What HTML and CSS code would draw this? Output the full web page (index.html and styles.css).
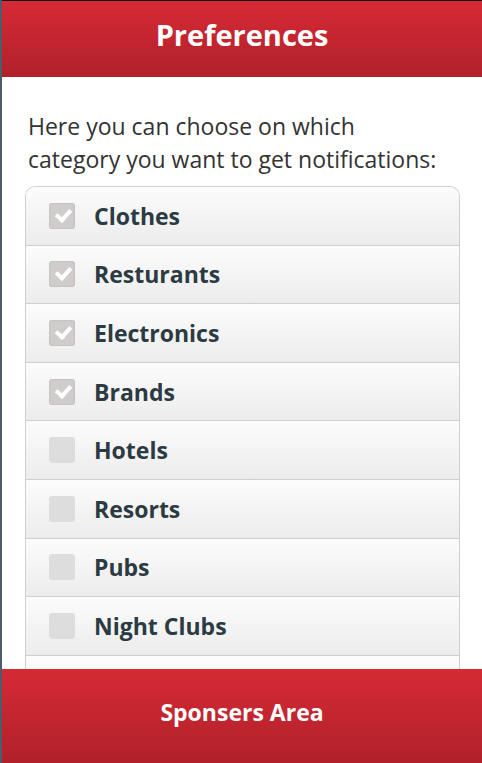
FILE: index.html
```html
<!DOCTYPE html>
<html lang="en">
<head>
  <meta charset="UTF-8">
  <meta name="viewport" content="width=device-width, initial-scale=1.0">
  <title>Preferences</title>
  <link rel="stylesheet" href="styles.css">
</head>
<body>
<div class="page">
  <div class="header">Preferences</div>

  <div class="content">
    <p class="intro">Here you can choose on which<br>category you want to get notifications:</p>

    <!-- category list -->
    <div class="list">
      <label class="row"><input type="checkbox" checked><span class="box"></span><span class="name">Clothes</span></label>
      <label class="row"><input type="checkbox" checked><span class="box"></span><span class="name">Resturants</span></label>
      <label class="row"><input type="checkbox" checked><span class="box"></span><span class="name">Electronics</span></label>
      <label class="row"><input type="checkbox" checked><span class="box"></span><span class="name">Brands</span></label>
      <label class="row"><input type="checkbox"><span class="box"></span><span class="name">Hotels</span></label>
      <label class="row"><input type="checkbox"><span class="box"></span><span class="name">Resorts</span></label>
      <label class="row"><input type="checkbox"><span class="box"></span><span class="name">Pubs</span></label>
      <label class="row"><input type="checkbox"><span class="box"></span><span class="name">Night Clubs</span></label>
      <label class="row"><input type="checkbox"><span class="box"></span><span class="name">Cafes</span></label>
    </div>
  </div>

  <div class="footer">Sponsers Area</div>
</div>
</body>
</html>
```

FILE: styles.css
```css
body {
  margin: 0;
  font-family: "Open Sans", "DejaVu Sans", sans-serif;
  background: #fff;
  color: #333;
  overflow: hidden;
}
.page {
  border-left: 2px solid #4d5b6a;
  min-height: 763px;
  box-sizing: border-box;
}
.header {
  height: 77px;
  border-top: 1px solid #111;
  background: linear-gradient(#d62a35, #b0212a);
  color: #fff;
  font-size: 29px;
  font-weight: 700;
  display: flex;
  align-items: center;
  justify-content: center;
  padding-bottom: 9px;
  box-sizing: border-box;
}
.content {
  padding: 33px 21px 0 26px;
}
.intro {
  margin: 0 0 10px;
  font-size: 23px;
  line-height: 33px;
}

/* List */
.list {
  border: 1px solid #cfcfcf;
  border-bottom: none;
  border-radius: 10px 10px 0 0;
  overflow: hidden;
  margin-left: -3px;
  margin-right: 1px;
}
.row {
  display: flex;
  align-items: center;
  height: 57.6px;
  border-bottom: 1px solid #cfcfcf;
  background: linear-gradient(#fcfcfc, #ececec);
  padding-left: 23px;
  cursor: pointer;
}
.row input {
  display: none;
}
.box {
  width: 26px;
  height: 26px;
  border-radius: 3px;
  background: #dddddd;
  margin-right: 19px;
  display: flex;
  align-items: center;
  justify-content: center;
}
.row input:checked + .box {
  background: #d0cccc;
  box-shadow: inset 0 0 2px rgba(0,0,0,.15);
}
.row input:checked + .box::after {
  content: "";
  width: 11px;
  height: 6px;
  border-left: 4px solid #fff;
  border-bottom: 4px solid #fff;
  transform: translate(1px, -2px) rotate(-48deg);
}
.name {
  font-size: 23px;
  font-weight: 700;
  color: #2c3a42;
}

/* Footer */
.footer {
  position: fixed;
  left: 2px;
  right: 0;
  bottom: 0;
  height: 94px;
  background: linear-gradient(#d62a35, #b0212a);
  color: #fff;
  font-size: 23px;
  font-weight: 700;
  display: flex;
  align-items: center;
  justify-content: center;
  padding-bottom: 8px;
  box-sizing: border-box;
}
```
